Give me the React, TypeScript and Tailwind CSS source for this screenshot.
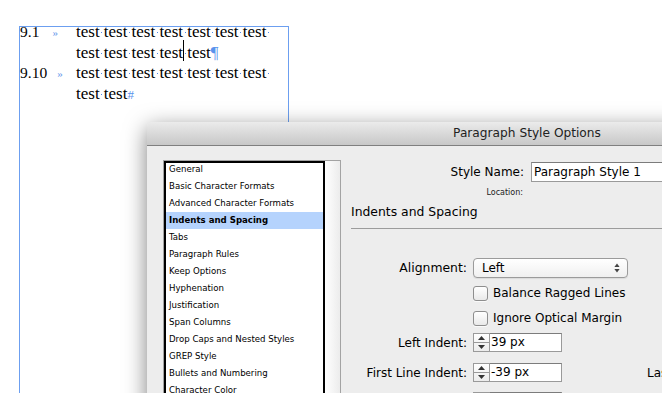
const ui = "font-['DejaVu_Sans','Liberation_Sans',sans-serif]"

const ITEMS = [
  'General',
  'Basic Character Formats',
  'Advanced Character Formats',
  'Indents and Spacing',
  'Tabs',
  'Paragraph Rules',
  'Keep Options',
  'Hyphenation',
  'Justification',
  'Span Columns',
  'Drop Caps and Nested Styles',
  'GREP Style',
  'Bullets and Numbering',
  'Character Color',
]

// hidden-character space marker
function Sp() {
  return (
    <span className="relative inline-block w-[4.2px] h-0">
      <span className="absolute left-[1.6px] bottom-[4px] w-px h-px bg-[#4f8ae6]" />
    </span>
  )
}

function Cursor() {
  return (
    <span className="relative inline-block w-0 h-0">
      <span className="absolute left-0 bottom-[-3px] w-px h-[21px] bg-black" />
    </span>
  )
}

function Words({ n, trailing }: { n: number; trailing?: boolean }) {
  return (
    <>
      {Array.from({ length: n }).map((_, i) => (
        <span key={i}>
          test
          {(i < n - 1 || trailing) && <Sp />}
        </span>
      ))}
    </>
  )
}

function Spinner() {
  return (
    <div className="w-[17px] h-[19px] border border-[#9a9a9a] bg-gradient-to-b from-white to-[#ececec] flex flex-col">
      <div className="flex-1 flex items-center justify-center border-b border-[#9a9a9a]">
        <svg width="7" height="4" viewBox="0 0 7 4"><path d="M3.5 0L7 4H0z" fill="#333" /></svg>
      </div>
      <div className="flex-1 flex items-center justify-center">
        <svg width="7" height="4" viewBox="0 0 7 4"><path d="M0 0h7L3.5 4z" fill="#333" /></svg>
      </div>
    </div>
  )
}

function NumField({ value }: { value: string }) {
  return (
    <div className="flex">
      <Spinner />
      <div className="w-[72px] h-[19px] border border-[#9a9a9a] border-l-0 border-t-[#7c7c7c] bg-white pl-[1px] text-[12px] leading-[17px] text-black">
        {value}
      </div>
    </div>
  )
}

function Check({ label }: { label: string }) {
  return (
    <div className="mt-[5px] h-[20px] flex items-center pl-[122px] gap-[5px]">
      <div className="w-[15px] h-[15px] rounded-[3px] border border-[#8e8e8e] bg-gradient-to-b from-white to-[#e9e9e9] shadow-[0_1px_0_rgba(255,255,255,0.7)]" />
      <span className="text-[12px] text-black">{label}</span>
    </div>
  )
}

export default function App() {
  return (
    <div className="relative w-[662px] h-[393px] overflow-hidden bg-white">
      {/* text frame */}
      <div className="ml-[19px] mt-[26px] w-[270px] h-[400px] border border-[#6c9ff0] font-['Liberation_Serif',serif] text-black">
        <div className="-mt-[5px] text-[17px] leading-[20.7px] whitespace-nowrap">
          <div className="flex">
            <div className="w-[56px] shrink-0 text-[15.5px]">
              9.1<span className="ml-[13px] text-[11px] text-[#6c9cec] align-[1px]">»</span>
            </div>
            <div><Words n={7} trailing /></div>
          </div>
          <div className="pl-[56px]">
            <span>test<Sp /></span>
            <span>test<Sp /></span>
            <span>test<Sp /></span>
            <span>test</span>
            <Cursor />
            <Sp />
            <span>test</span>
            <span className="text-[#5a93ec]">¶</span>
          </div>
          <div className="flex">
            <div className="w-[56px] shrink-0 text-[15.5px]">
              9.10<span className="ml-[10px] text-[11px] text-[#6c9cec] align-[1px]">»</span>
            </div>
            <div><Words n={7} trailing /></div>
          </div>
          <div className="pl-[56px]">
            <Words n={2} />
            <span className="text-[13px] text-[#5a93ec]">#</span>
          </div>
        </div>
      </div>

      {/* dialog window */}
      <div className={`absolute left-[147px] top-[122px] w-[760px] h-[320px] rounded-t-[5px] bg-[#ededed] shadow-[0_6px_22px_rgba(0,0,0,0.5)] ${ui}`}>
        <div className="h-[24px] rounded-t-[5px] border-b border-[#7f7f7f] bg-gradient-to-b from-[#ebebeb] to-[#c8c8c8] flex items-center justify-center text-[12.2px] text-[#222]">
          Paragraph Style Options
        </div>

        <div className="flex items-start pl-[16px]">
          {/* category list */}
          <div className="mt-[14px] flex border border-[#a3a3a3] border-b-0 h-[260px]">
            <div className="w-[161px] h-full bg-white px-[2px] shadow-[inset_0_0_0_2px_#000]">
              {ITEMS.map(it => (
                <div
                  key={it}
                  className={`h-[17px] pl-[3px] flex items-center text-[8.6px] text-black ${
                    it === 'Indents and Spacing' ? 'bg-[#b5d3fd] font-bold' : ''
                  }`}
                >
                  {it}
                </div>
              ))}
            </div>
            <div className="w-[15px] h-full bg-gradient-to-r from-white to-[#ececec]" />
          </div>

          {/* right panel */}
          <div className="ml-[10px] w-[420px] pt-[16px] flex flex-col text-black">
            <div className="h-[20px] flex items-center">
              <div className="w-[173px] text-right text-[12px]">Style Name:</div>
              <div className="ml-[7px] w-[220px] h-[20px] border border-[#9a9a9a] border-t-[#7c7c7c] bg-white pl-[2px] text-[12px] leading-[18px]">
                Paragraph Style 1
              </div>
            </div>
            <div className="mt-[5px] h-[12px] w-[172px] text-right text-[8px] leading-[12px] text-[#222]">Location:</div>
            <div className="mt-[5px] h-[16px] text-[12.4px] leading-[16px]">Indents and Spacing</div>
            <div className="mt-[8px] h-px w-full bg-[#9c9c9c]" />

            <div className="mt-[29px] h-[20px] flex items-center">
              <div className="w-[116px] text-right text-[12.4px]">Alignment:</div>
              <div className="ml-[6px] w-[155px] h-[20px] rounded-[4px] border border-[#9b9b9b] bg-gradient-to-b from-white to-[#f0f0f0] shadow-[0_1px_1px_rgba(0,0,0,0.08)] flex items-center justify-between pl-[8px] pr-[7px] text-[12px]">
                <span>Left</span>
                <svg width="6" height="10" viewBox="0 0 6 10">
                  <path d="M3 0.5L5.6 4H0.4z" fill="#444" />
                  <path d="M0.4 6h5.2L3 9.5z" fill="#444" />
                </svg>
              </div>
            </div>

            <Check label="Balance Ragged Lines" />
            <Check label="Ignore Optical Margin" />

            <div className="mt-[5px] h-[19px] flex items-center">
              <div className="w-[116px] text-right text-[12px]">Left Indent:</div>
              <div className="ml-[6px]"><NumField value="39 px" /></div>
            </div>
            <div className="mt-[11px] h-[19px] flex items-center">
              <div className="w-[116px] text-right text-[12px]">First Line Indent:</div>
              <div className="ml-[6px]"><NumField value="-39 px" /></div>
              <div className="ml-[85px] text-[12px]">Last Line Indent:</div>
            </div>
            <div className="mt-[10px] h-[19px] flex items-center pl-[122px]">
              <NumField value="" />
            </div>
          </div>
        </div>
      </div>
    </div>
  )
}
